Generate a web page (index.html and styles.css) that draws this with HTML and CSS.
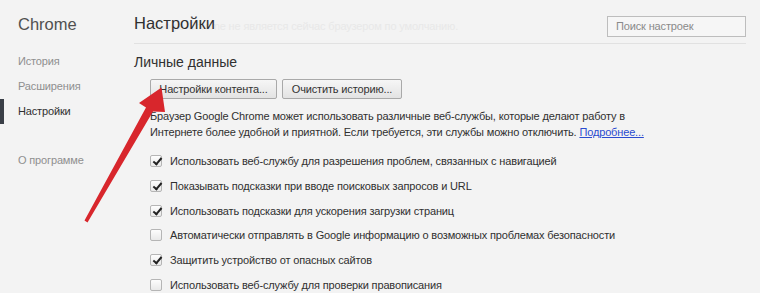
FILE: index.html
```html
<!DOCTYPE html>
<html lang="ru">
<head>
<meta charset="utf-8">
<link rel="stylesheet" href="styles.css">
</head>
<body>
<div class="page">
  <aside class="sidebar">
    <div class="brand">Chrome</div>
    <nav class="nav">
      <div class="nav-item">История</div>
      <div class="nav-item">Расширения</div>
      <div class="nav-item active">Настройки</div>
      <div class="nav-item about">О программе</div>
    </nav>
  </aside>
  <main class="main">
    <header class="header">
      <div class="title-wrap">
        <span class="ghost">Google Chrome не является сейчас браузером по умолчанию.</span>
        <h1 class="title">Настройки</h1>
      </div>
      <div class="search">Поиск настроек</div>
    </header>
    <section class="section">
      <h2 class="section-title">Личные данные</h2>
      <div class="body">
        <div class="buttons">
          <button class="btn btn-content">Настройки контента...</button>
          <button class="btn btn-clear">Очистить историю...</button>
        </div>
        <p class="desc">Браузер Google Chrome может использовать различные веб-службы, которые делают работу в Интернете более удобной и приятной. Если требуется, эти службы можно отключить. <a class="link" href="#">Подробнее...</a></p>
        <ul class="checks">
          <li class="check"><span class="box on"></span>Использовать веб-службу для разрешения проблем, связанных с навигацией</li>
          <li class="check"><span class="box on"></span>Показывать подсказки при вводе поисковых запросов и URL</li>
          <li class="check"><span class="box on"></span>Использовать подсказки для ускорения загрузки страниц</li>
          <li class="check"><span class="box"></span>Автоматически отправлять в Google информацию о возможных проблемах безопасности</li>
          <li class="check"><span class="box on"></span>Защитить устройство от опасных сайтов</li>
          <li class="check"><span class="box"></span>Использовать веб-службу для проверки правописания</li>
        </ul>
      </div>
    </section>
  </main>
</div>
<svg class="arrow" width="760" height="293" viewBox="0 0 760 293">
  <polygon points="84.5,220.5 146,107.5 139,103 161.5,87.5 165,112 153,111.5 87.5,222.5" fill="#d8262c"/>
</svg>
</body>
</html>
```
FILE: styles.css
```css
* { box-sizing: border-box; }
html, body { margin: 0; padding: 0; }
body {
  width: 760px;
  height: 293px;
  overflow: hidden;
  background: #f3f3f3;
  font-family: "Liberation Sans", Arial, sans-serif;
  color: #303030;
  position: relative;
}
.page {
  display: flex;
  height: 100%;
}
.sidebar {
  width: 134px;
  flex: none;
  padding-top: 13px;
}
.brand {
  font-size: 16.5px;
  color: #505050;
  padding-left: 18px;
  height: 22px;
  line-height: 22px;
}
.nav {
  margin-top: 14px;
}
.nav-item {
  font-size: 11px;
  letter-spacing: -0.15px;
  color: #8f8f8f;
  height: 25px;
  line-height: 25px;
  border-left: 4px solid transparent;
  padding-left: 14px;
}
.nav-item.active {
  color: #303030;
  border-left-color: #3a3f47;
}
.nav-item.about {
  margin-top: 24px;
}
.main {
  flex: 1;
  padding-right: 14px;
}
.header {
  display: flex;
  justify-content: space-between;
  align-items: flex-start;
  height: 44px;
  padding-top: 12px;
  border-bottom: 1px solid #e1e1e1;
}
.title-wrap {
  position: relative;
}
.ghost {
  position: absolute;
  left: 16px;
  top: 8px;
  white-space: nowrap;
  font-size: 11px;
  letter-spacing: -0.15px;
  color: #e8e8e8;
}
.title {
  position: relative;
  margin: 0;
  font-size: 16.5px;
  font-weight: normal;
  color: #303030;
  line-height: 22px;
}
.search {
  margin-top: 4px;
  width: 139px;
  height: 21px;
  border: 1px solid #bdbdbd;
  background: #f6f6f6;
  font-size: 11px;
  letter-spacing: -0.15px;
  color: #8a8a8a;
  line-height: 19px;
  padding-left: 8px;
}
.section {
  padding-top: 9px;
}
.section-title {
  margin: 0;
  font-size: 14px;
  font-weight: normal;
  color: #303030;
  line-height: 18px;
}
.body {
  padding-left: 16px;
}
.buttons {
  display: flex;
  gap: 5px;
  margin-top: 8px;
}
.btn {
  height: 20px;
  border: 1px solid #a9a9a9;
  border-radius: 2px;
  background: linear-gradient(#f6f6f6, #e3e3e3);
  font-family: inherit;
  font-size: 11px;
  letter-spacing: -0.15px;
  color: #333;
  padding: 0;
}
.btn-content { width: 127px; }
.btn-clear { width: 120px; }
.desc {
  margin: 9px 0 0;
  font-size: 11px;
  letter-spacing: -0.15px;
  line-height: 16px;
  width: 500px;
  color: #303030;
}
.link {
  color: #2a4bd0;
  text-decoration: underline;
}
.checks {
  list-style: none;
  margin: 9px 0 0;
  padding: 0;
}
.check {
  display: flex;
  align-items: center;
  height: 24.7px;
  font-size: 11px;
  letter-spacing: -0.15px;
  color: #303030;
}
.box {
  width: 12px;
  height: 12px;
  border: 1px solid #b5b5b5;
  border-radius: 2px;
  background: linear-gradient(#fdfdfd, #e9e9e9);
  margin-right: 8px;
  position: relative;
  flex: none;
}
.box.on::after {
  content: "";
  position: absolute;
  left: 3.5px;
  top: 0px;
  width: 3px;
  height: 7px;
  border-right: 2px solid #222;
  border-bottom: 2px solid #222;
  transform: rotate(40deg);
}
.arrow {
  position: absolute;
  left: 0;
  top: 0;
  pointer-events: none;
}
```
